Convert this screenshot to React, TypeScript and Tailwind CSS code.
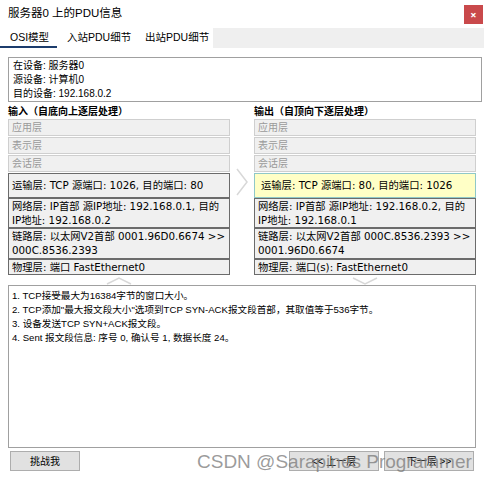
import React from "react";

const cjk = "font-['Tahoma','DejaVu_Sans','Noto_Sans_CJK_SC',sans-serif]";
const ui = "font-['Liberation_Sans','Noto_Sans_CJK_SC',sans-serif]";

const dimRow =
  "h-[17px] border border-[#cfcfcf] bg-[#f0f0f0] px-[3px] text-[10px] leading-[15px] text-[#9a9a9a]";
const row =
  "whitespace-nowrap border border-[#6b6b6b] bg-[#f0f0f0] px-[3px] text-[10.3px] leading-[14px] text-black";

type Layer = { text: React.ReactNode; h: string; hl?: boolean };

const Column: React.FC<{ title: string; layers: Layer[]; down?: boolean }> = ({
  title,
  layers,
  down,
}) => (
  <div className="flex w-[222px] flex-col">
    <div className={`${ui} mb-[1px] text-[10px] font-bold leading-[13px]`}>{title}</div>
    <div className={`${cjk} flex flex-col gap-px`}>
      <div className={dimRow}>应用层</div>
      <div className={dimRow}>表示层</div>
      <div className={dimRow}>会话层</div>
      <div className="flex flex-col">
        {layers.map((l, i) => (
          <div
            key={i}
            className={`${row} ${l.h} ${l.hl ? "!bg-[#ffffc6] !border-[#8fc8c8] pl-[6px]" : ""}`}
          >
            {l.text}
          </div>
        ))}
      </div>
    </div>
    <div className="flex justify-center pt-[2px]">
      <svg width="26" height="8" viewBox="0 0 26 8">
        {down ? (
          <path d="M1 1 L13 7 L25 1" fill="none" stroke="#d8d8d8" strokeWidth="1.5" />
        ) : (
          <path d="M1 7 L13 1 L25 7" fill="none" stroke="#d8d8d8" strokeWidth="1.5" />
        )}
      </svg>
    </div>
  </div>
);

export default function App() {
  return (
    <div className="relative h-[481px] w-[484px] overflow-hidden bg-white text-black">
      {/* title bar */}
      <div className="flex h-[28px] items-center justify-between pl-[8px] pr-[1px]">
        <div className={`${ui} text-[11.5px]`}>服务器0 上的PDU信息</div>
        <div className="flex h-[19px] w-[19px] items-center justify-center bg-[#c9494b] text-[11px] font-bold leading-none text-white">
          ×
        </div>
      </div>

      {/* tabs */}
      <div className={`${ui} flex h-[20px] whitespace-nowrap text-[10.5px]`}>
        <div className="relative w-[60px] pl-[10px] leading-[18px]">
          OSI模型
          <div className="absolute bottom-0 left-0 h-[2px] w-[57px] bg-[#1c3c6c]" />
        </div>
        <div className="w-[80px] pl-[7px] leading-[18px]">入站PDU细节</div>
        <div className="w-[73px] pl-[5px] leading-[18px]">出站PDU细节</div>
        <div className="flex-1 bg-[#efefef]" />
      </div>

      <div className="px-[8px] pt-[9px]">
        {/* device info */}
        <div
          className={`${ui} h-[45px] w-[474px] border border-[#a0a0a0] px-[4px] pt-[1px] text-[10px] leading-[14px]`}
        >
          <div>在设备: 服务器0</div>
          <div>源设备: 计算机0</div>
          <div>目的设备: 192.168.0.2</div>
        </div>

        {/* columns */}
        <div className="mt-[3px] flex items-start">
          <Column
            title="输入（自底向上逐层处理）"
            layers={[
              { text: "运输层: TCP 源端口: 1026, 目的端口: 80", h: "h-[25px] !leading-[23px]" },
              { text: <>网络层: IP首部 源IP地址: 192.168.0.1, 目的<br />IP地址: 192.168.0.2</>, h: "h-[30px]" },
              { text: <>链路层: 以太网V2首部 0001.96D0.6674 &gt;&gt;<br />000C.8536.2393</>, h: "h-[31px]" },
              { text: "物理层: 端口 FastEthernet0", h: "h-[16px]" },
            ]}
          />
          <div className="flex w-[24px] justify-center pt-[63px]">
            <svg width="12" height="28" viewBox="0 0 12 28">
              <path d="M1 1 L11 14 L1 27" fill="none" stroke="#d8d8d8" strokeWidth="1.5" />
            </svg>
          </div>
          <Column
            down
            title="输出（自顶向下逐层处理）"
            layers={[
              { text: "运输层: TCP 源端口: 80, 目的端口: 1026", h: "h-[25px] !leading-[23px]", hl: true },
              { text: <>网络层: IP首部 源IP地址: 192.168.0.2, 目的<br />IP地址: 192.168.0.1</>, h: "h-[30px]" },
              { text: <>链路层: 以太网V2首部 000C.8536.2393 &gt;&gt;<br />0001.96D0.6674</>, h: "h-[31px]" },
              { text: "物理层: 端口(s): FastEthernet0", h: "h-[16px]" },
            ]}
          />
        </div>

        {/* details */}
        <div
          className={`${ui} h-[163px] w-[468px] border border-[#a0a0a0] px-[3px] pt-[3px] text-[9.6px] leading-[14px]`}
        >
          <div>1. TCP接受最大为16384字节的窗口大小。</div>
          <div>2. TCP添加"最大报文段大小"选项到TCP SYN-ACK报文段首部，其取值等于536字节。</div>
          <div>3. 设备发送TCP SYN+ACK报文段。</div>
          <div>4. Sent 报文段信息: 序号 0, 确认号 1, 数据长度 24。</div>
        </div>

        {/* buttons */}
        <div className={`${ui} mt-[3px] flex whitespace-nowrap text-[10px]`}>
          <button className="ml-[2px] h-[20px] w-[70px] border border-[#adadad] bg-[#e1e1e1]">挑战我</button>
          <div className="flex-1" />
          <button className="h-[20px] w-[90px] border border-[#adadad] bg-[#e1e1e1]">&lt;&lt; 上一层</button>
          <button className="ml-[5px] mr-[2px] h-[20px] w-[90px] border border-[#adadad] bg-[#e1e1e1]">下一层 &gt;&gt;</button>
        </div>
      </div>

      {/* watermark */}
      <div className="pointer-events-none absolute left-[197px] top-[450px] whitespace-nowrap font-['Liberation_Sans',sans-serif] text-[19px] leading-[24px] text-[#7a7a7a]/75">
        CSDN @Sarapines Programmer
      </div>
    </div>
  );
}
